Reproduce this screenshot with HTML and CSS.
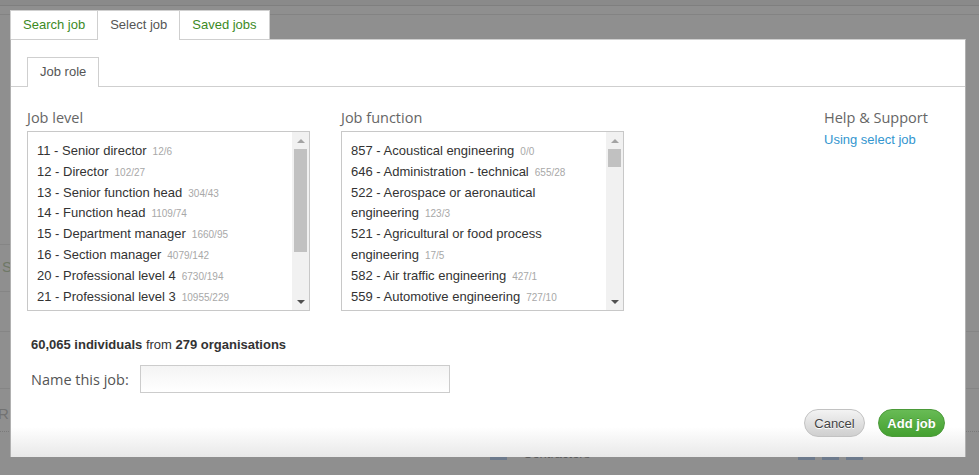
FILE: index.html
```html
<!DOCTYPE html>
<html>
<head>
<meta charset="utf-8">
<title>Select job</title>
<link rel="stylesheet" href="styles.css">
</head>
<body>
<div class="page">
  <div class="bg-head1"></div>
  <div class="bg-head2"></div>
  <div class="bg-block1"></div>
  <div class="bg-block2">S</div>
  <div class="bg-block3"></div>
  <div class="bg-block4"></div>
  <div class="bg-block5">R</div>
  <div class="bg-block6">
    <span class="bg-icon first"></span><span class="bg-text">Contractors</span>
    <span class="bg-icon group"></span><span class="bg-icon"></span><span class="bg-icon"></span>
  </div>
</div>

<div class="modal">
  <div class="tabs">
    <div class="tab link">Search job</div>
    <div class="tab active">Select job</div>
    <div class="tab link">Saved jobs</div>
  </div>
  <div class="dialog">
    <div class="subtabs"><div class="subtab">Job role</div></div>
    <div class="content">
      <div class="col">
        <div class="label">Job level</div>
        <div class="listbox">
          <div class="items">
            <div class="item">11 - Senior director<span class="cnt">12/6</span></div>
            <div class="item">12 - Director<span class="cnt">102/27</span></div>
            <div class="item">13 - Senior function head<span class="cnt">304/43</span></div>
            <div class="item">14 - Function head<span class="cnt">1109/74</span></div>
            <div class="item">15 - Department manager<span class="cnt">1660/95</span></div>
            <div class="item">16 - Section manager<span class="cnt">4079/142</span></div>
            <div class="item">20 - Professional level 4<span class="cnt">6730/194</span></div>
            <div class="item">21 - Professional level 3<span class="cnt">10955/229</span></div>
          </div>
          <div class="scrollbar">
            <div class="arrow"><span class="tri-up"></span></div>
            <div class="track"><div class="thumb thumb-level"></div></div>
            <div class="arrow"><span class="tri-down"></span></div>
          </div>
        </div>
      </div>
      <div class="col">
        <div class="label">Job function</div>
        <div class="listbox">
          <div class="items">
            <div class="item">857 - Acoustical engineering<span class="cnt">0/0</span></div>
            <div class="item">646 - Administration - technical<span class="cnt">655/28</span></div>
            <div class="item">522 - Aerospace or aeronautical engineering<span class="cnt">123/3</span></div>
            <div class="item">521 - Agricultural or food process engineering<span class="cnt">17/5</span></div>
            <div class="item">582 - Air traffic engineering<span class="cnt">427/1</span></div>
            <div class="item">559 - Automotive engineering<span class="cnt">727/10</span></div>
          </div>
          <div class="scrollbar">
            <div class="arrow"><span class="tri-up"></span></div>
            <div class="track"><div class="thumb thumb-func"></div></div>
            <div class="arrow"><span class="tri-down"></span></div>
          </div>
        </div>
      </div>
      <div class="help">
        <div class="label">Help &amp; Support</div>
        <a class="help-link" href="#">Using select job</a>
      </div>
    </div>
    <div class="stats"><b>60,065 individuals</b> from <b>279 organisations</b></div>
    <div class="name-row">
      <label class="name-label" for="jobname">Name this job:</label>
      <input class="name-input" id="jobname" type="text">
    </div>
    <div class="actions">
      <button class="btn cancel">Cancel</button>
      <button class="btn add">Add job</button>
    </div>
  </div>
</div>
</body>
</html>
```

FILE: styles.css
```css
* { box-sizing: border-box; }

body {
  margin: 0;
  width: 979px;
  height: 475px;
  overflow: hidden;
  position: relative;
  background: #8f8f8f;
  font-family: "Liberation Sans", Arial, sans-serif;
}

/* background page (under the overlay) */
.page { height: 475px; overflow: hidden; }
.bg-head1 { height: 6px; border-bottom: 1px solid #7f7f7f; background: #8a8a8a; }
.bg-head2 { height: 9px; border-bottom: 1px solid #838383; }
.bg-block1 { width: 300px; height: 230px; border-bottom: 1px solid #858585; }
.bg-block2 {
  width: 300px; height: 47px; border-bottom: 1px solid #858585;
  color: #6e7866; font-size: 15px; line-height: 44px; padding-left: 2px;
}
.bg-block3 { height: 40px; border-bottom: 1px solid #858585; }
.bg-block4 { height: 57px; border-bottom: 1px solid #858585; }
.bg-block5 {
  height: 43px; border-bottom: 1px dotted #7a7a7a;
  color: #727272; font-size: 15px; line-height: 50px; text-indent: -2px;
}
.bg-block6 { display: flex; align-items: center; height: 30px; padding-left: 490px; margin-top: 6px; }
.bg-icon { display: inline-block; width: 17px; height: 14px; background: #6d7a8c; margin-right: 7px; }
.bg-icon.group { margin-left: 208px; }
.bg-text { color: #5a5a5a; font-size: 13px; margin-left: 9px; }

/* modal */
.modal { position: absolute; left: 10px; top: 10px; width: 956px; }

.tabs { display: flex; }
.tab {
  height: 29px;
  padding: 0 12px;
  border: 1px solid #cfcfcf;
  border-bottom: none;
  background: #fff;
  font-size: 13px;
  line-height: 28px;
  color: #3c8a1f;
  margin-right: -1px;
  position: relative;
}
.tab.active { color: #555; height: 30px; margin-bottom: -1px; z-index: 1; }

.dialog {
  height: 418px;
  border-top: 1px solid #cfcfcf;
  border-left: 1px solid #b0b0b0;
  border-right: 1px solid #b0b0b0;
  background: linear-gradient(to bottom, #fff 0, #fff calc(100% - 30px), #e8e8e8 100%);
  position: relative;
}

.subtabs {
  display: flex;
  padding: 17px 0 0 16px;
  border-bottom: 1px solid #cfcfcf;
}
.subtab {
  height: 30px;
  margin-bottom: -1px;
  padding: 0 12px;
  border: 1px solid #cfcfcf;
  border-bottom: none;
  background: #fff;
  color: #555;
  font-size: 13px;
  line-height: 28px;
}

.content {
  display: grid;
  grid-template-columns: 283px 283px 1fr;
  column-gap: 31px;
  padding: 21px 17px 0 16px;
}

.label {
  font-family: "Open Sans", sans-serif;
  font-size: 14.5px;
  line-height: 20px;
  color: #666;
  margin-bottom: 3px;
}

.listbox {
  display: flex;
  height: 180px;
  border: 1px solid #c8c8c8;
  background: #fff;
}
.items {
  flex: 1;
  overflow: hidden;
  padding: 9px 10px 0 9px;
  font-size: 13px;
  line-height: 20.8px;
  color: #333;
}
.cnt { font-size: 10px; line-height: 10px; color: #a8a8a8; margin-left: 6px; }

.scrollbar {
  width: 17px;
  display: flex;
  flex-direction: column;
  background: #f1f1f1;
}
.arrow { height: 17px; display: flex; align-items: center; justify-content: center; }
.tri-up {
  width: 0; height: 0;
  border-left: 4px solid transparent;
  border-right: 4px solid transparent;
  border-bottom: 4px solid #a3a3a3;
}
.tri-down {
  width: 0; height: 0;
  border-left: 4px solid transparent;
  border-right: 4px solid transparent;
  border-top: 4px solid #505050;
}
.track { flex: 1; padding: 0 2px; }
.thumb { background: #c1c1c1; }
.thumb-level { height: 103px; }
.thumb-func { height: 18px; }

.help { justify-self: end; width: 124px; }
.help-link {
  display: block;
  font-size: 13px;
  line-height: 18px;
  color: #3396cf;
  text-decoration: none;
}

.stats {
  padding: 26px 0 0 20px;
  font-size: 13px;
  line-height: 16px;
  color: #333;
}

.name-row {
  display: flex;
  align-items: center;
  padding: 12px 0 0 20px;
}
.name-label {
  font-family: "Open Sans", sans-serif;
  font-size: 14.5px;
  color: #555;
  width: 109px;
}
.name-input {
  width: 310px;
  height: 28px;
  border: 1px solid #cccccc;
  background: linear-gradient(to bottom, #f4f4f4, #fff);
  margin: 0;
}

.actions {
  display: flex;
  justify-content: flex-end;
  gap: 13px;
  padding: 16px 20px 0 0;
}
.btn {
  height: 28px;
  border-radius: 14px;
  font-family: "Liberation Sans", Arial, sans-serif;
  font-size: 13px;
  padding: 0;
  margin: 0;
  white-space: nowrap;
  cursor: pointer;
}
.cancel {
  width: 61px;
  border: 1px solid #c2c2c2;
  background: linear-gradient(to bottom, #f3f3f3, #cfcfcf);
  color: #444;
  text-shadow: 0 1px 0 #fff;
}
.add {
  width: 67px;
  border: 1px solid #4b9a39;
  background: linear-gradient(to bottom, #68bb55, #44a030);
  color: #fff;
  font-weight: bold;
  text-shadow: 0 -1px 0 rgba(0,0,0,0.2);
}
```
